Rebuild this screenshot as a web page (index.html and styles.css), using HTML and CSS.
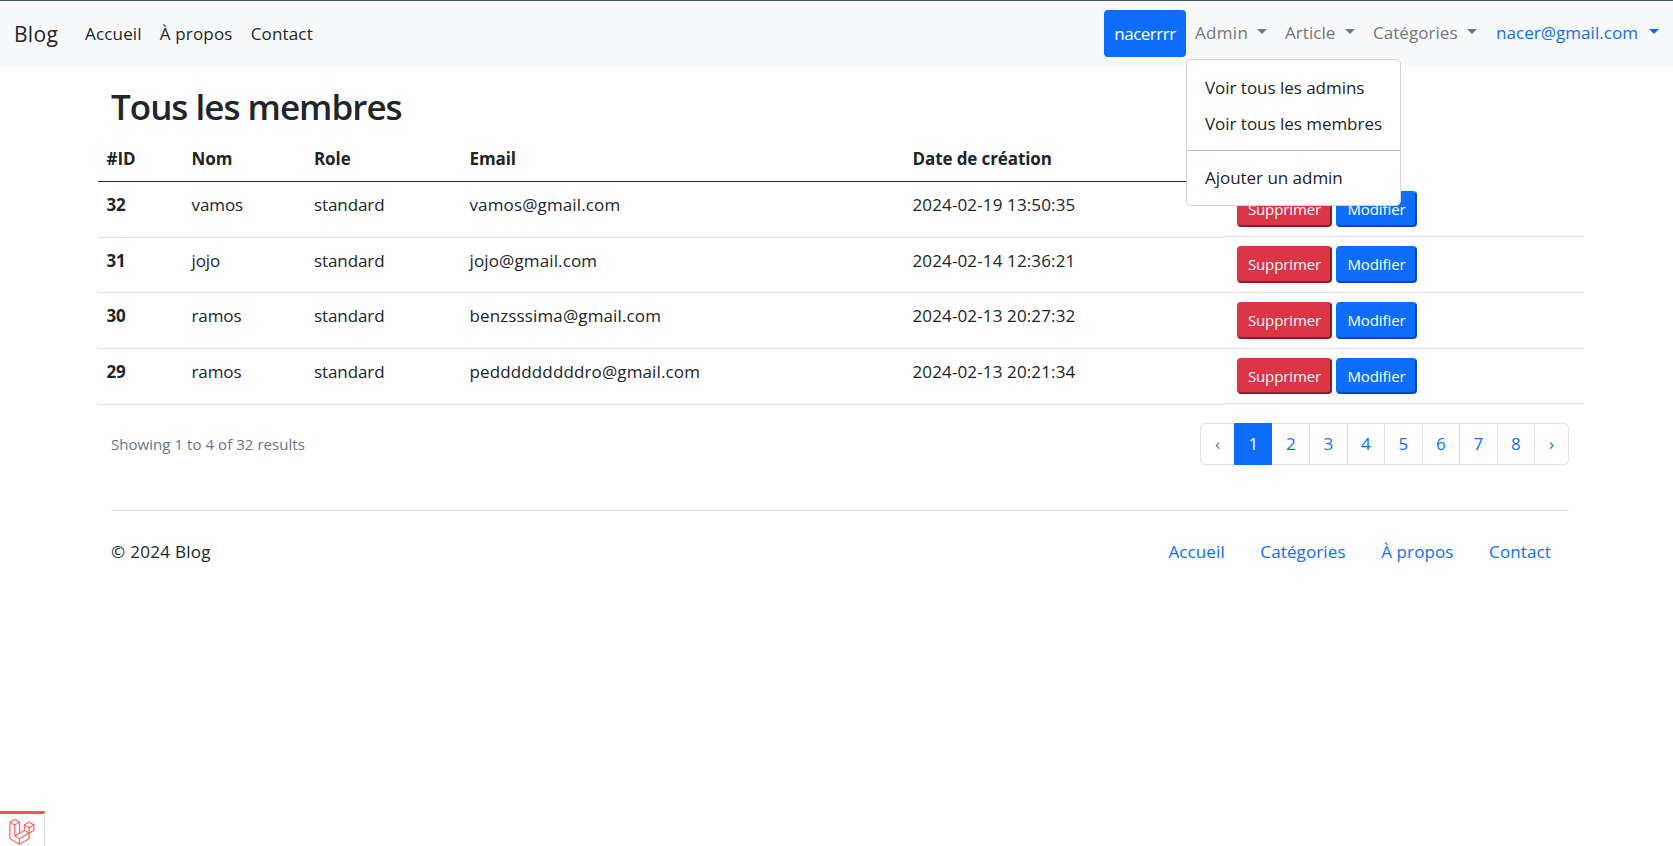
FILE: index.html
```html
<!DOCTYPE html>
<html lang="fr">
<head>
<meta charset="utf-8">
<title>Blog</title>
<link rel="stylesheet" href="styles.css">
</head>
<body>
<nav class="navbar">
  <a class="brand">Blog</a>
  <ul class="nav-left">
    <li>Accueil</li><li class="propos">À propos</li><li>Contact</li>
  </ul>
  <ul class="nav-right">
    <li class="user-btn">nacerrrr</li>
    <li class="drop drop-admin"><span>Admin</span><i class="caret"></i>
      <div class="menu">
        <a>Voir tous les admins</a>
        <a class="second">Voir tous les membres</a>
        <hr>
        <a>Ajouter un admin</a>
      </div>
    </li>
    <li class="drop drop-article"><span>Article</span><i class="caret"></i></li>
    <li class="drop drop-cat"><span>Catégories</span><i class="caret"></i></li>
    <li class="drop drop-mail"><span>nacer@gmail.com</span><i class="caret"></i></li>
  </ul>
</nav>
<main>
  <h1>Tous les membres</h1>
  <table class="members">
    <thead>
      <tr><th>#ID</th><th>Nom</th><th>Role</th><th>Email</th><th>Date de création</th></tr>
    </thead>
    <tbody>
      <tr class="tall short-action"><th>32</th><td>vamos</td><td>standard</td><td class="email">vamos@gmail.com</td><td class="date">2024-02-19 13:50:35</td><td class="action"><button class="btn red">Supprimer</button><button class="btn blue">Modifier</button></td></tr>
      <tr class="low"><th>31</th><td>jojo</td><td>standard</td><td class="email">jojo@gmail.com</td><td class="date">2024-02-14 12:36:21</td><td class="action"><button class="btn red">Supprimer</button><button class="btn blue">Modifier</button></td></tr>
      <tr class="tall"><th>30</th><td>ramos</td><td>standard</td><td class="email">benzsssima@gmail.com</td><td class="date">2024-02-13 20:27:32</td><td class="action"><button class="btn red">Supprimer</button><button class="btn blue">Modifier</button></td></tr>
      <tr class="tall short-action"><th>29</th><td>ramos</td><td>standard</td><td class="email">pedddddddddro@gmail.com</td><td class="date">2024-02-13 20:21:34</td><td class="action"><button class="btn red">Supprimer</button><button class="btn blue">Modifier</button></td></tr>
    </tbody>
  </table>
  <div class="pager">
    <p>Showing 1 to 4 of 32 results</p>
    <ul class="pages">
      <li class="arrow off">‹</li><li class="active">1</li><li>2</li><li>3</li><li>4</li><li>5</li><li>6</li><li>7</li><li>8</li><li class="arrow">›</li>
    </ul>
  </div>
</main>
<footer>
  <p>© 2024 Blog</p>
  <ul><li>Accueil</li><li>Catégories</li><li>À propos</li><li>Contact</li></ul>
</footer>
<div class="debugbar">
  <svg width="26" height="26" viewBox="0 0 50 52"><path fill="#f55247" stroke="#f55247" stroke-width=".5" d="M49.626 11.564a.809.809 0 0 1 .028.209v10.972a.8.8 0 0 1-.402.694l-9.209 5.302V39.25c0 .286-.152.55-.4.694L20.42 51.01c-.044.025-.092.041-.14.058-.018.006-.035.017-.054.022a.805.805 0 0 1-.41 0c-.022-.006-.042-.018-.063-.026-.044-.016-.09-.03-.132-.054L.402 39.944A.801.801 0 0 1 0 39.25V6.334c0-.072.01-.142.028-.21.006-.023.02-.044.028-.067.015-.042.029-.085.051-.124.015-.026.037-.047.055-.071.023-.032.044-.065.071-.093.023-.023.053-.04.079-.06.029-.024.055-.05.088-.069h.001l9.61-5.533a.802.802 0 0 1 .8 0l9.61 5.533h.002c.032.02.059.045.088.068.026.02.055.038.078.06.028.029.048.062.072.094.017.024.04.045.054.071.023.04.036.082.052.124.008.023.022.044.028.068a.809.809 0 0 1 .028.209v20.559l8.008-4.611v-10.51c0-.07.01-.141.028-.208.007-.024.02-.045.028-.068.016-.042.03-.085.052-.124.015-.026.037-.047.054-.071.024-.032.044-.065.072-.093.023-.023.052-.04.078-.06.03-.024.056-.05.088-.069h.001l9.611-5.533a.801.801 0 0 1 .8 0l9.61 5.533c.034.02.06.045.09.068.025.02.054.038.077.06.028.029.048.062.072.094.018.024.04.045.054.071.023.039.036.082.052.124.009.023.022.044.028.068zm-1.574 10.718v-9.124l-3.363 1.936-4.646 2.675v9.124l8.01-4.611zm-9.61 16.505v-9.13l-4.57 2.61-13.05 7.448v9.216l17.62-10.144zM1.602 7.719v31.068L19.22 48.93v-9.214l-9.204-5.209-.003-.002-.004-.002c-.031-.018-.057-.044-.086-.066-.025-.02-.054-.036-.076-.058l-.002-.003c-.026-.025-.044-.056-.066-.084-.02-.027-.044-.05-.06-.078l-.001-.003c-.018-.03-.029-.066-.042-.1-.013-.03-.03-.058-.038-.09v-.001c-.01-.038-.012-.078-.016-.117-.004-.03-.012-.06-.012-.09V12.33L4.965 9.654 1.602 7.72zm8.81-5.994L2.405 6.334l8.005 4.609 8.006-4.61-8.006-4.608zm4.164 28.764l4.645-2.674V7.719l-3.363 1.936-4.646 2.675v20.096l3.364-1.937zM39.243 7.164l-8.006 4.609 8.006 4.609 8.005-4.61-8.005-4.608zm-.801 10.605l-4.646-2.675-3.363-1.936v9.124l4.645 2.674 3.364 1.937v-9.124zM20.02 38.33l11.743-6.704 5.87-3.35-8-4.606-9.211 5.303-8.395 4.833 7.993 4.524z"/></svg>
</div>
</body>
</html>
```
FILE: styles.css
```css
* { box-sizing: border-box; }
body { margin: 0; height: 846px; display: flex; flex-direction: column; overflow: hidden; background: #fff; color: #212529; font: 17px/27px "Open Sans", "Segoe UI", sans-serif; letter-spacing: -0.1px; }
ul { list-style: none; margin: 0; padding: 0; display: flex; }
p { margin: 0; }
.navbar { height: 66px; flex: none; border-top: 1px solid #495866; background: #f8f9fb; display: flex; padding: 9px 14px 0; }
.brand { width: 71px; font-size: 21px; line-height: 48px; letter-spacing: 0.3px; }
.nav-left { line-height: 48px; letter-spacing: 0.17px; }
.nav-left li { margin-right: 18px; }
.nav-right { margin-left: auto; color: #747678; line-height: 46px; letter-spacing: 0.05px; }
.user-btn { width: 82px; height: 47px; margin-right: 9px; text-align: center; color: #fff; background: #0d6efd; border-radius: 4px; line-height: 48px; letter-spacing: -0.5px; }
.drop { position: relative; display: flex; justify-content: space-between; }
.drop-admin { width: 72px; margin-right: 18px; }
.drop-admin > span { letter-spacing: 0.3px; }
.drop-article { width: 70px; margin-right: 18px; }
.drop-cat { width: 104px; margin-right: 19px; }
.drop-mail { width: 163px; color: #0d6efd; }
.caret { width: 10px; height: 5px; margin-top: 19px; border: 5px solid transparent; border-top-color: currentColor; border-bottom: 0; }
.menu { position: absolute; z-index: 2; left: -9px; top: 49px; width: 215px; height: 147px; padding: 10px 0; display: flex; flex-direction: column; background: #fff; border: 1px solid #d3d3d3; border-radius: 5px; color: #212529; line-height: 36px; letter-spacing: -0.03px; }
.menu a { padding-left: 18px; white-space: nowrap; }
.menu hr { width: 100%; margin: 8px 0 9px; border: 0; border-top: 1px solid #c4c5c6; }
main { width: 1485px; margin-left: 98px; }
h1 { margin: 17px 0 0 13px; font-size: 35px; line-height: 48px; font-weight: 600; letter-spacing: -1px; }
.members, .members thead, .members tbody { display: block; }
.members tr { display: grid; grid-template-columns: 85px 122.5px 155.5px 443px 320px 359px; }
.members th, .members td { padding: 14px 8.5px 0; border-bottom: 1px solid #dee2e6; text-align: left; line-height: 27px; }
.members thead tr { height: 51px; }
.members thead th { border-color: #212529; padding-top: 14px; }
.members tbody th, .members tbody td { padding-top: 9px; }
.members .email { letter-spacing: 0.13px; }
.members .date { letter-spacing: 0.13px; }
.tall { height: 56px; }
.low { height: 55px; }
.short-action .action { height: 55px; }
.short-action .btn { height: 36px; }
.members .action { display: flex; gap: 4px; padding: 9px 0 0 13px; }
.members .low .action { padding-top: 8px; }
.btn { height: 37px; padding: 0; border-radius: 4px; color: #fff; font: 15px/33px "Open Sans", sans-serif; letter-spacing: -0.1px; }
.red { width: 95px; background: #dc3545; border: 2px outset #dc3545; }
.blue { width: 81px; background: #0d6efd; border: 2px outset #0d6efd; }
.pager { display: flex; justify-content: space-between; padding: 18px 14px 0 13px; }
.pager p { font-size: 15px; line-height: 43px; color: #6c757d; letter-spacing: 0.05px; }
.pages { height: 42px; border: 1px solid #dee2e6; border-radius: 5px; color: #0d6efd; line-height: 40px; }
.pages li { width: 37.5px; text-align: center; border-left: 1px solid #dee2e6; }
.pages .arrow { width: 34px; }
.pages .off { width: 33px; border: 0; color: #6c757d; }
.pages .active { margin: -1px 0; line-height: 42px; background: #0d6efd; border-color: #0d6efd; color: #fff; }
.pages .active + li { border-color: transparent; }
footer { width: 1458px; margin: 44px 0 0 111px; padding-top: 27px; border-top: 1px solid #dee2e6; display: flex; justify-content: space-between; letter-spacing: 0.3px; }
footer ul { gap: 35.5px; padding-right: 18px; color: #0d6efd; letter-spacing: 0.12px; }
.debugbar { margin-top: auto; width: 45px; height: 35px; padding: 5px 0 0 9px; border-top: 3px solid #f4515c; border-right: 1px solid #ddd; }
.debugbar svg { display: block; }
```
